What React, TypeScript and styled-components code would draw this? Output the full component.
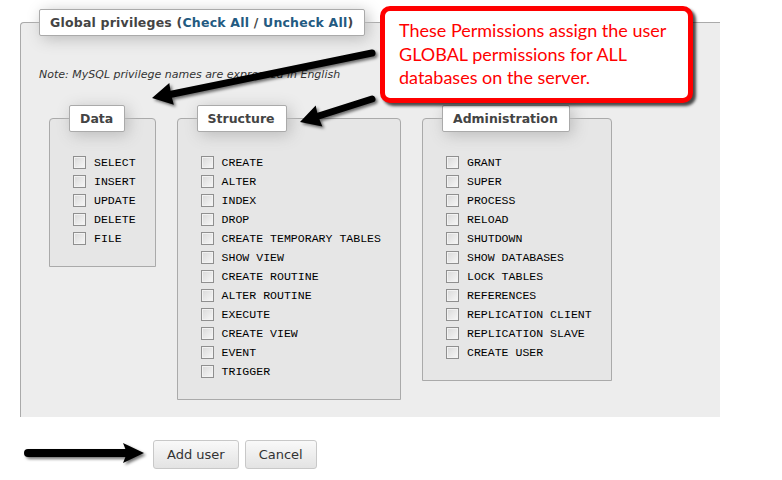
import React from "react";
import styled, { createGlobalStyle } from "styled-components";

const GlobalStyle = createGlobalStyle`
  html, body { margin: 0; padding: 0; background: #fff; }
  body {
    font-family: "DejaVu Sans", Verdana, sans-serif;
    font-size: 12px;
    color: #444;
  }
`;

const Page = styled.div`
  position: relative;
  width: 782px;
  height: 480px;
  overflow: hidden;
  box-sizing: border-box;
  padding: 9px 0 0 20px;
`;

const OuterFieldset = styled.fieldset`
  margin: 0;
  width: 700px;
  box-sizing: border-box;
  border: 1px solid #aaa;
  border-right: none;
  border-bottom: none;
  border-radius: 4px 0 0 0;
  background: #ededed;
  padding: 0 18px 17px 18px;
`;

const Legend = styled.legend<{ $spacing?: number }>`
  margin: 0;
  padding: 5px 11px 5px 10px;
  border: 1px solid #aaa;
  border-radius: 2px;
  background: #fff;
  box-shadow: 3px 3px 15px #bbb;
  font-weight: bold;
  font-size: 12.5px;
  line-height: 15px;
  letter-spacing: ${(p) => p.$spacing ?? 0}px;
  color: #444;
`;

const LinkText = styled.a`
  color: #235a81;
  text-decoration: none;
`;

const Note = styled.p`
  margin: 32px 0 0 0;
  font-style: italic;
  font-size: 11px;
  line-height: 14px;
  color: #333;
`;

const Columns = styled.div`
  display: flex;
  align-items: flex-start;
  gap: 21px;
  padding-left: 10px;
  margin-top: 23px;
`;

const InnerFieldset = styled.fieldset`
  margin: 0;
  border: 1px solid #aaa;
  border-radius: 4px 4px 0 0;
  background: #e6e6e6;
  padding: 21px 19px 18px 19px;
`;

const Row = styled.label`
  display: flex;
  align-items: center;
  height: 19px;
`;

const Check = styled.input.attrs({ type: "checkbox" })`
  appearance: none;
  -webkit-appearance: none;
  box-sizing: border-box;
  width: 13px;
  height: 13px;
  margin: 3px 3px 3px 4px;
  border: 1px solid #8f8f8f;
  background: linear-gradient(135deg, #d9d9d9, #f7f7f7);
  box-shadow: inset 0 0 0 1px #f2f2f2;
`;

const PrivName = styled.code`
  margin-left: 5px;
  font-family: "Liberation Mono", "Courier New", monospace;
  font-size: 11.55px;
  color: #000;
  white-space: pre;
`;

const Footer = styled.div`
  display: flex;
  align-items: center;
  gap: 6px;
  margin-top: 22px;
  margin-left: 2px;
`;

const ArrowWrap = styled.svg`
  width: 128px;
  height: 30px;
  margin-right: -3px;
  overflow: visible;
`;

const Button = styled.button`
  height: 29px;
  padding: 0 13px;
  font-family: "DejaVu Sans", Verdana, sans-serif;
  font-size: 13px;
  color: #333;
  border: 1px solid #c8c8c8;
  border-radius: 3px;
  background: linear-gradient(#f9f9f9, #e3e3e3);
`;

const Overlay = styled.svg`
  position: absolute;
  left: 0;
  top: 0;
  width: 782px;
  height: 480px;
  pointer-events: none;
`;

const Callout = styled.div`
  position: absolute;
  left: 380px;
  top: 6px;
  width: 313px;
  height: 97px;
  box-sizing: border-box;
  border: 5px solid #ff0000;
  border-radius: 10px;
  background: #fff;
  box-shadow: 3px 3px 3px rgba(0, 0, 0, 0.7);
  padding: 8px 0 0 14px;
  font-family: Lato, "Open Sans", sans-serif;
  font-size: 18px;
  line-height: 23.5px;
  color: #ff0000;
`;

const groups: { title: string; items: string[] }[] = [
  { title: "Data", items: ["SELECT", "INSERT", "UPDATE", "DELETE", "FILE"] },
  {
    title: "Structure",
    items: [
      "CREATE",
      "ALTER",
      "INDEX",
      "DROP",
      "CREATE TEMPORARY TABLES",
      "SHOW VIEW",
      "CREATE ROUTINE",
      "ALTER ROUTINE",
      "EXECUTE",
      "CREATE VIEW",
      "EVENT",
      "TRIGGER",
    ],
  },
  {
    title: "Administration",
    items: [
      "GRANT",
      "SUPER",
      "PROCESS",
      "RELOAD",
      "SHUTDOWN",
      "SHOW DATABASES",
      "LOCK TABLES",
      "REFERENCES",
      "REPLICATION CLIENT",
      "REPLICATION SLAVE",
      "CREATE USER",
    ],
  },
];

const ShadowFilter = ({ id }: { id: string }) => (
  <defs>
    <filter id={id} x="-20%" y="-50%" width="140%" height="200%">
      <feDropShadow dx="2" dy="2" stdDeviation="1.6" floodColor="#000" floodOpacity="0.55" />
    </filter>
  </defs>
);

export default function App() {
  return (
    <>
      <GlobalStyle />
      <Page>
        <OuterFieldset>
          <Legend $spacing={0.2}>
            Global privileges (<LinkText href="#">Check All</LinkText> /{" "}
            <LinkText href="#">Uncheck All</LinkText>)
          </Legend>
          <Note>Note: MySQL privilege names are expressed in English</Note>
          <Columns>
            {groups.map((g) => (
              <InnerFieldset key={g.title}>
                <Legend>{g.title}</Legend>
                {g.items.map((it) => (
                  <Row key={it}>
                    <Check />
                    <PrivName>{it}</PrivName>
                  </Row>
                ))}
              </InnerFieldset>
            ))}
          </Columns>
        </OuterFieldset>
        <Footer>
          <ArrowWrap viewBox="0 0 128 30">
            <ShadowFilter id="sh3" />
            <g filter="url(#sh3)">
              <line x1="6" y1="14" x2="106" y2="14" stroke="#000" strokeWidth="8" strokeLinecap="round" />
              <polygon points="101,4 122,14 101,24 105,14" fill="#000" />
            </g>
          </ArrowWrap>
          <Button>Add user</Button>
          <Button>Cancel</Button>
        </Footer>
        <Overlay viewBox="0 0 782 480">
          <ShadowFilter id="sh1" />
          <g filter="url(#sh1)">
            <line x1="372" y1="53" x2="170" y2="94.5" stroke="#000" strokeWidth="7" strokeLinecap="round" />
            <polygon points="152,98 173.8,104.7 171,94 169.3,83.1" fill="#000" />
            <line x1="372" y1="99" x2="317" y2="116.5" stroke="#000" strokeWidth="7" strokeLinecap="round" />
            <polygon points="300,122 322.4,126.4 318,116 315.7,105.4" fill="#000" />
          </g>
        </Overlay>
        <Callout>
          These Permissions assign the user
          <br />
          GLOBAL permissions for ALL
          <br />
          databases on the server.
        </Callout>
      </Page>
    </>
  );
}
